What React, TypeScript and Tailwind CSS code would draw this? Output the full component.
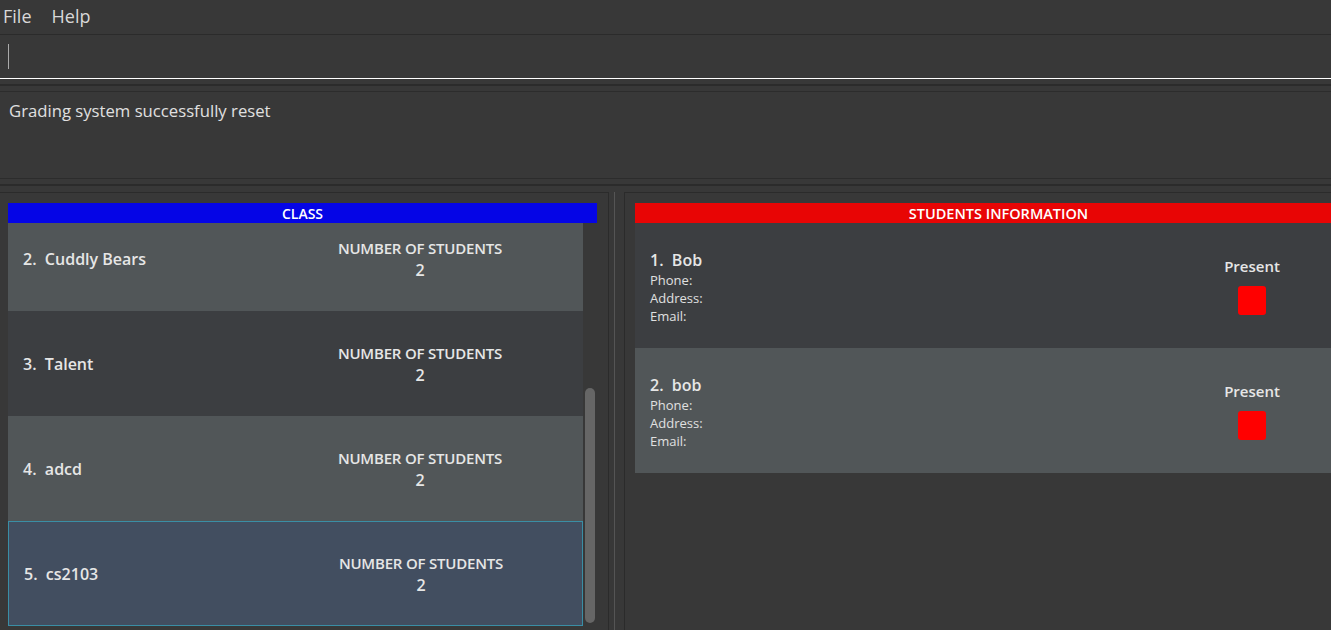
import React from "react";

const font = { fontFamily: '"Open Sans", "Noto Sans", sans-serif' };

function ClassCard({ idx, name, variant, cut }: { idx: number; name: string; variant: "light" | "dark" | "selected"; cut?: boolean }) {
  const bg =
    variant === "light"
      ? "bg-[#515658]"
      : variant === "dark"
      ? "bg-[#3c3e41]"
      : "bg-[#424e60] border border-[#3a8ea5]";
  return (
    <div className={`${bg} h-[105px] shrink-0 flex items-center ${cut ? "-mt-[17px]" : ""}`}>
      <div className="w-[329px] pl-[15px] text-[16px] font-semibold text-[#e6e6e6]">
        {idx}.&nbsp;&nbsp;{name}
      </div>
      <div className="w-[166px] text-center text-[#e6e6e6] font-semibold leading-[22px]">
        <div className="text-[15px] tracking-[-0.2px] whitespace-nowrap">NUMBER OF STUDENTS</div>
        <div className="text-[16px]">2</div>
      </div>
    </div>
  );
}

function StudentCard({ idx, name, light }: { idx: number; name: string; light?: boolean }) {
  return (
    <div className={`${light ? "bg-[#515658]" : "bg-[#3c3e41]"} h-[125px] shrink-0 flex items-center justify-between`}>
      <div className="pl-[15px] pt-[2px] text-[#e0e0e0]">
        <div className="text-[16px] font-semibold leading-[22px] text-[#e6e6e6]">
          {idx}.&nbsp;&nbsp;{name}
        </div>
        <div className="text-[13px] leading-[18px]">Phone:</div>
        <div className="text-[13px] leading-[18px]">Address:</div>
        <div className="text-[13px] leading-[18px]">Email:</div>
      </div>
      <div className="w-[80px] mr-[70px] flex flex-col items-center">
        <div className="text-[15px] font-semibold text-[#e6e6e6] leading-[20px]">Present</div>
        <div className="mt-[10px] w-[28px] h-[29px] rounded-[3px] bg-[#ff0000]" />
      </div>
    </div>
  );
}

export default function App() {
  return (
    <div style={font} className="w-[1331px] h-[630px] bg-[#383838] overflow-hidden flex flex-col text-[#dddddd]">
      {/* Menu bar */}
      <div className="h-[35px] shrink-0 flex items-center border-b border-[#2b2b2b] text-[18px] text-[#d8d8d8] pb-[1px]">
        <span className="ml-[3px]">File</span>
        <span className="ml-[20px]">Help</span>
      </div>
      {/* Command box */}
      <div className="h-[44px] shrink-0 flex items-center border-b border-white">
        <div className="ml-[8px] w-[1px] h-[25px] bg-[#aaaaaa]" />
      </div>
      {/* separator */}
      <div className="h-[5px] shrink-0" />
      <div className="h-[2px] shrink-0 bg-[#2b2b2b]" />
      <div className="h-[5px] shrink-0" />
      {/* Result display */}
      <div className="h-[88px] shrink-0 border-y border-[#2c2c2c] pl-[9px] pt-[6px] text-[16.7px] text-[#e0e0e0]">
        Grading system successfully reset
      </div>
      <div className="h-[5px] shrink-0" />
      <div className="h-[2px] shrink-0 bg-[#2b2b2b]" />
      <div className="h-[6px] shrink-0" />
      {/* Panels */}
      <div className="flex-1 flex min-h-0">
        {/* Left panel */}
        <div className="w-[609px] shrink-0 border-t border-r border-[#2b2b2b] pt-[10px] pl-[8px] pr-[11px] flex flex-col min-h-0">
          <div className="h-[20px] shrink-0 bg-[#0505e6] text-white text-[14px] font-semibold flex items-center justify-center pt-[1px]">
            CLASS
          </div>
          <div className="flex-1 flex min-h-0">
            <div className="w-[575px] flex flex-col overflow-hidden">
              <ClassCard idx={2} name="Cuddly Bears" variant="light" cut />
              <ClassCard idx={3} name="Talent" variant="dark" />
              <ClassCard idx={4} name="adcd" variant="light" />
              <ClassCard idx={5} name="cs2103" variant="selected" />
            </div>
            <div className="w-[14px] flex justify-center">
              <div className="w-[10px] mt-[165px] h-[235px] rounded-[5px] bg-[#666666]" />
            </div>
          </div>
        </div>
        {/* Divider */}
        <div className="w-[5px] shrink-0" />
        <div className="w-[1px] shrink-0 bg-[#555555]" />
        <div className="w-[9px] shrink-0" />
        {/* Right panel */}
        <div className="flex-1 border-t border-l border-[#2b2b2b] pt-[10px] pl-[10px] flex flex-col min-w-0 min-h-0 overflow-hidden">
          <div className="w-[727px] shrink-0 flex flex-col">
            <div className="h-[20px] shrink-0 bg-[#e80505] text-white text-[14.5px] font-semibold flex items-center justify-center pt-[1px] whitespace-nowrap">
              STUDENTS INFORMATION
            </div>
            <StudentCard idx={1} name="Bob" />
            <StudentCard idx={2} name="bob" light />
          </div>
        </div>
      </div>
    </div>
  );
}
